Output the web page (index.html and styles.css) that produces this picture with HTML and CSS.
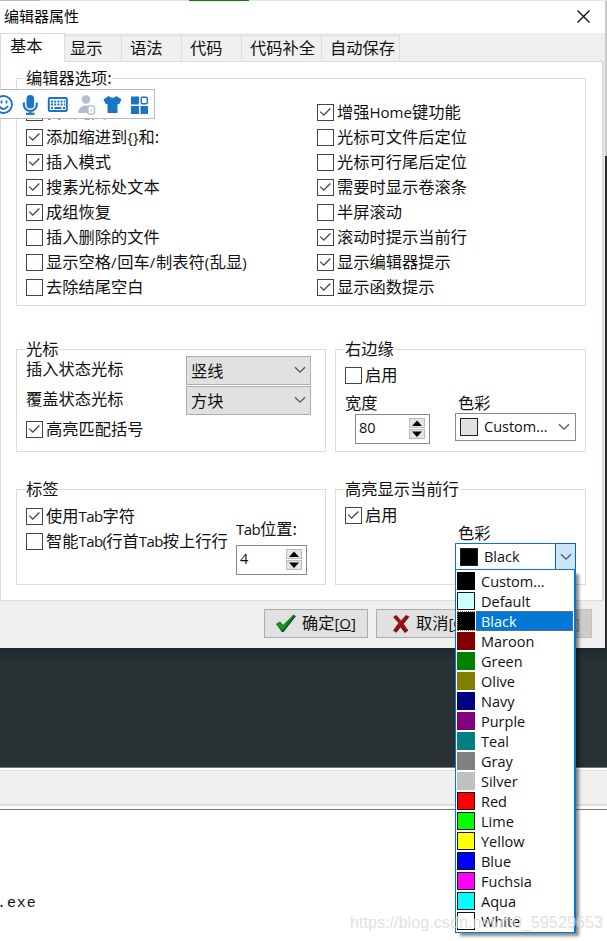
FILE: index.html
```
<!DOCTYPE html>
<html lang="zh-CN">
<head>
<meta charset="utf-8">
<title>编辑器属性</title>
<link rel="stylesheet" href="styles.css">
</head>
<body>
<svg class="defs" width="0" height="0">
  <symbol id="check" viewBox="0 0 17 17"><path d="M2.500 7.500l4 4 7.500-7.500" fill="none" stroke="#444" stroke-width="1.5"/></symbol>
  <symbol id="chev" viewBox="0 0 12 8"><path d="M1 1.2l5 5 5-5" fill="none" stroke="#555" stroke-width="1.3"/></symbol>
  <symbol id="up" viewBox="0 0 14 8"><path d="M2 7l5-5.500L12 7z"/></symbol>
  <symbol id="down" viewBox="0 0 14 8"><path d="M2 1.500l5 5.500 5-5.500z"/></symbol>
</svg>
<div class="strip"><i></i><b></b></div>
<div class="top">
  <main class="dialog">
    <header class="title"><span>编辑器属性</span>
      <svg width="13" height="13" viewBox="0 0 13 13"><path d="M.5.5l12 12M12.5.5l-12 12" stroke="#000" stroke-width="1.2"/></svg>
    </header>
    <nav class="tabs">
      <span class="tab active">基本</span><span class="tab t2">显示</span><span class="tab t3">语法</span><span class="tab t4">代码</span><span class="tab t5">代码补全</span><span class="tab t6">自动保存</span>
    </nav>
    <section class="page">
      <div class="group options">
        <div class="legend">编辑器选项:</div>
        <div class="cols">
          <div class="col">
            <label><svg class="box"><use href="#check"/></svg>自动缩进</label>
            <label><svg class="box"><use href="#check"/></svg><span>添加缩进到<em>{}</em>和:</span></label>
            <label><svg class="box"><use href="#check"/></svg>插入模式</label>
            <label><svg class="box"><use href="#check"/></svg>搜素光标处文本</label>
            <label><svg class="box"><use href="#check"/></svg>成组恢复</label>
            <label><svg class="box"></svg>插入删除的文件</label>
            <label><svg class="box"></svg><span class="marks">显示空格<em>/</em>回车<em>/</em>制表符<em>(</em>乱显<em>)</em></span></label>
            <label><svg class="box"></svg>去除结尾空白</label>
          </div>
          <div class="col">
            <label><svg class="box"><use href="#check"/></svg><span>增强<em>Home</em>键功能</span></label>
            <label><svg class="box"></svg>光标可文件后定位</label>
            <label><svg class="box"></svg>光标可行尾后定位</label>
            <label><svg class="box"><use href="#check"/></svg>需要时显示卷滚条</label>
            <label><svg class="box"></svg>半屏滚动</label>
            <label><svg class="box"><use href="#check"/></svg>滚动时提示当前行</label>
            <label><svg class="box"><use href="#check"/></svg>显示编辑器提示</label>
            <label><svg class="box"><use href="#check"/></svg>显示函数提示</label>
          </div>
        </div>
      </div>
      <div class="pair carets">
        <div class="group">
          <div class="legend">光标</div>
          <div class="line"><span>插入状态光标</span><div class="select">竖线<svg class="chev"><use href="#chev"/></svg></div></div>
          <div class="line"><span>覆盖状态光标</span><div class="select">方块<svg class="chev"><use href="#chev"/></svg></div></div>
          <label class="match"><svg class="box"><use href="#check"/></svg>高亮匹配括号</label>
        </div>
        <div class="group">
          <div class="legend">右边缘</div>
          <label class="enable"><svg class="box"></svg>启用</label>
          <div class="fields">
            <div class="field width"><span>宽度</span><div class="spin"><em>80</em><div class="arrows"><svg><use href="#up"/></svg><svg><use href="#down"/></svg></div></div></div>
            <div class="field"><span>色彩</span><div class="color"><i class="sw"></i><em>Custom...</em><svg class="chev"><use href="#chev"/></svg></div></div>
          </div>
        </div>
      </div>
      <div class="pair lower">
        <div class="group tabopts">
          <div class="legend">标签</div>
          <div class="tabrow">
            <div class="checks">
              <label><svg class="box"><use href="#check"/></svg><span>使用<em>Tab</em>字符</span></label>
              <label><svg class="box"></svg><span>智能<em>Tab(</em>行首<em>Tab</em>按上行行</span></label>
            </div>
            <div class="tabpos"><span><em>Tab</em>位置:</span><div class="spin"><em>4</em><div class="arrows"><svg><use href="#up"/></svg><svg><use href="#down"/></svg></div></div></div>
          </div>
        </div>
        <div class="group">
          <div class="legend">高亮显示当前行</div>
          <label class="enable"><svg class="box"><use href="#check"/></svg>启用</label>
          <div class="field hl"><span>色彩</span>
            <div class="color open"><i class="sw"></i><em>Black</em><div class="drop"><svg class="chev"><use href="#chev"/></svg></div>
              <ul class="list">
                <li><i class="c-black"></i>Custom...</li>
                <li><i class="c-default ol"></i>Default</li>
                <li class="sel"><i class="c-black"></i>Black</li>
                <li><i class="c-maroon"></i>Maroon</li>
                <li><i class="c-green"></i>Green</li>
                <li><i class="c-olive"></i>Olive</li>
                <li><i class="c-navy"></i>Navy</li>
                <li><i class="c-purple"></i>Purple</li>
                <li><i class="c-teal"></i>Teal</li>
                <li><i class="c-gray"></i>Gray</li>
                <li><i class="c-silver"></i>Silver</li>
                <li><i class="c-red ol"></i>Red</li>
                <li><i class="c-lime ol"></i>Lime</li>
                <li><i class="c-yellow ol"></i>Yellow</li>
                <li><i class="c-blue ol"></i>Blue</li>
                <li><i class="c-fuchsia ol"></i>Fuchsia</li>
                <li><i class="c-aqua ol"></i>Aqua</li>
                <li><i class="c-white ol"></i>White</li>
              </ul>
            </div>
          </div>
        </div>
      </div>
    </section>
    <footer class="buttons">
      <button><svg width="22" height="20" viewBox="0 0 22 20"><path d="M1 11l4-2.5 3 3.5L18.5 1.5 20.5 3 8.500 18.500 6.500 18.500z" fill="#087a12"/><path d="M2.500 11.200L5 9.800l2.800 4L18 3 7.400 16.500z" fill="#12a51b"/><path d="M20.500 3L8.500 18.500H6.500" fill="none" stroke="#11305c"/></svg><span>确定<em>[<u>O</u>]</em></span></button>
      <button class="cancel"><svg width="18" height="19" viewBox="0 0 18 19"><path d="M1 3l3.500-2L9 6.500 14 1l3 1.500-5.500 7L16 16l-3 2.500-4.500-6-4.500 6-3-2L6.500 9z" fill="#a00d12"/><path d="M4 18.500l4.500-6 4.500 6 3-2.500M11.500 9.500l5.500-7" fill="none" stroke="#51080c"/></svg><span>取消<em>[<u>C</u>]</em></span></button>
      <button class="help"><em>[<u>H</u>]</em></button>
    </footer>
    <div class="ime">
      <svg width="155" height="29" viewBox="0 0 155 29">
        <g fill="none" stroke="#1b74c5" stroke-width="1.800"><circle cx="3.500" cy="14.500" r="8.500"/><path d="M-1 16q4.500 6 9 0M1.500 10.500v3M6.500 10.500v3"/><path stroke-width="2.200" d="M23.800 12.500v2a6.500 6.500 0 0 0 13 0v-2M30.300 21v3"/><path stroke-width="2.200" d="M26 23.800h8.500"/></g>
        <rect x="26.500" y="5" width="7.600" height="13.500" rx="3.800" fill="#1b74c5"/>
        <rect x="48.800" y="8" width="18" height="13" rx="1" fill="none" stroke="#1b74c5" stroke-width="2"/>
        <path d="M51 11.500h14M51 14.500h14" stroke="#1b74c5" stroke-width="1.800" stroke-dasharray="2 1.200"/><path d="M51 18h2M54.500 18h7M63 18h2" stroke="#1b74c5" stroke-width="1.800"/>
        <g fill="#b4bdcf"><circle cx="86" cy="9.500" r="4.300"/><path d="M78 23c0-10 16-10 16 0z"/></g>
        <rect x="88" y="16" width="6.500" height="8" rx="1" fill="#fff" stroke="#b4bdcf" stroke-width="1.400"/><path d="M91.200 18.500v3" stroke="#b4bdcf"/>
        <path d="M108.500 6q4 3.500 8 0l5 3.500-2.500 5-1.500-.8V23h-10v-9.300l-1.500.8-2.500-5z" fill="#1b74c5"/>
        <path d="M131 6.500h8v8h-8zM131 16h8v8h-8zM140.500 16h7.500v8h-7.500z" fill="#1b74c5"/><rect x="141.200" y="7.200" width="6" height="6.500" rx="1" fill="none" stroke="#1b74c5" stroke-width="1.400"/>
      </svg>
    </div>
  </main>
  <aside class="edge"></aside>
</div>
<div class="editor"></div>
<div class="toolbar"></div>
<div class="console">.exe</div>
<div class="watermark">https://blog.csdn.net/m0_59529653</div>
</body>
</html>
```
FILE: styles.css
```
* { box-sizing: border-box; }
body { margin: 0; width: 607px; height: 941px; overflow: hidden; position: relative; background: #fff; color: #111; font: 16.25px/20px "Noto Sans CJK SC", sans-serif; }
.defs { position: absolute; }
em { font: 15px/20px "Open Sans", sans-serif; }
svg { display: block; flex: none; }
label, .tab, span { white-space: nowrap; }

.strip { height: 1px; display: flex; background: #e4e4e4; }
.strip i { width: 40px; background: #bbb; margin-right: 149px; }
.strip b { width: 60px; background: #107c10; }
.top { display: flex; height: 647px; }
.dialog { position: relative; width: 605px; background: #efefef; display: flex; flex-direction: column; }
.edge { width: 2px; background: linear-gradient(#c9c9c9 155px, #222b30 155px); }
.title { height: 32px; background: #fff; display: flex; justify-content: space-between; align-items: center; padding: 0 15px 1px 4px; color: #000; font-size: 15px; }
.title span { padding-bottom: 2px; }
.tabs { height: 28px; display: flex; align-items: flex-end; position: relative; }
.tab { height: 26px; border: 1px solid #dcdcdc; border-left: 0; border-bottom: 0; background: #f0f0f0; padding: 1px 0 0 5px; width: 58px; }
.tab.active { height: 29px; width: 65px; background: #fff; border-left: 1px solid #dcdcdc; padding: 1px 0 0 9px; margin-bottom: -1px; position: relative; }
.t2 { width: 57px; }
.t3 { width: 60px; padding-left: 8px; }
.t4 { width: 60px; padding-left: 8px; }
.t5 { width: 80px; padding-left: 8px; }
.t6 { width: 78px; padding-left: 8px; }
.page { height: 540px; width: 604px; background: #fff; border: 1px solid #dcdcdc; border-right-width: 2px; padding: 16px 16px 0 15px; }

.group { border: 1px solid #dcdcdc; padding-left: 9px; }
.legend { width: fit-content; height: 20px; margin-top: -12px; margin-bottom: 1px; background: #fff; }
label { display: flex; align-items: flex-start; gap: 3px; height: 25px; line-height: 22px; }
.box { width: 17px; height: 17px; border: 1px solid #444; background: #fff; margin-top: 4px; }
.options { height: 228px; }
.cols { display: grid; grid-template-columns: 291px 1fr; padding-top: 12px; }
.marks em { letter-spacing: .7px; }
.pair { display: grid; grid-template-columns: 310px 251px; gap: 9px; }
.carets { margin-top: 43px; }
.carets .group { height: 103px; }
.line { display: flex; justify-content: space-between; height: 30px; padding-right: 14px; }
.line > span { margin-top: -1px; }
.select { width: 125px; height: 29px; margin-top: -3px; border: 1px solid #adadad; background: #e1e1e1; display: flex; align-items: center; justify-content: space-between; padding: 0 4px 2px; }
.chev { width: 12px; height: 8px; }
.match { margin-top: -2px; }
.enable { margin-top: 5px; }
.fields { display: flex; margin-top: 4px; }
.field { display: flex; flex-direction: column; }
.field.width { width: 113px; }
.spin { width: 75px; height: 30px; border: 1px solid #8a8a8a; background: #fff; display: flex; justify-content: space-between; padding: 3px 4px 0 3px; }
.spin em, .color em { font-size: 14.500px; }
.width .spin { margin: 2px 0 0 10px; }
.arrows { display: flex; flex-direction: column; gap: 1px; }
.arrows svg { width: 16px; height: 10px; border: 1px solid #bbb; background: #e5e5e5; }
.color { width: 121px; height: 28px; border: 1px solid #8a8a8a; display: flex; align-items: center; padding: 0 5px 0 4px; }
.field > .color { margin: 1px 0 0 -3px; }
.sw { width: 18px; height: 18px; border: 1px solid #222; background: #e1e1e1; margin-right: 6px; }
.color em { flex: 1; }
.lower { margin-top: 37px; }
.lower .group { height: 96px; }
.tabrow { display: flex; padding-top: 5px; }
.tabrow label em, .tabpos span em { letter-spacing: -.6px; }
.checks { width: 210px; }
.tabpos { padding-top: 14px; }
.tabpos .spin { width: 71px; margin-top: 6px; }
.field.hl { margin: -6px 0 0 113px; }
.color.open { position: relative; border-color: #0078d7; padding-right: 0; }
.open .sw { background: #000; }
.drop { width: 21px; height: 28px; margin-right: -1px; border: 1px solid #0067b8; background: #cce4f7; display: flex; align-items: center; justify-content: center; }
.list { position: absolute; z-index: 3; left: -1px; top: 25px; width: 121px; height: 364px; margin: 0; padding: 1px; list-style: none; border: 1px solid #0078d7; border-right-width: 2px; background: #fff; box-shadow: 4px 4px 3px -1px #0007; }
.list li { height: 20px; display: flex; align-items: center; gap: 6px; font: 14.500px/19px "Open Sans", sans-serif; }
.list i { width: 18px; height: 18px; }
.list .ol { border: 1px solid #111; }
.list .sel { color: #fff; background: linear-gradient(90deg, #fff 19px, #0078d7 19px); outline: 1px dotted #b96325; outline-offset: -1px; }
.c-black { background: #000; }
.c-default { background: #ccffff; }
.c-maroon { background: #800000; }
.c-green { background: #008000; }
.c-olive { background: #808000; }
.c-navy { background: #000080; }
.c-purple { background: #800080; }
.c-teal { background: #008080; }
.c-gray { background: #808080; }
.c-silver { background: #c0c0c0; }
.c-red { background: #f00; }
.c-lime { background: #0f0; }
.c-yellow { background: #ff0; }
.c-blue { background: #00f; }
.c-fuchsia { background: #f0f; }
.c-aqua { background: #0ff; }
.c-white { background: #fff; }

.buttons { display: flex; gap: 8px; padding: 8px 0 0 264px; }
button { width: 104px; height: 29px; padding: 0 0 1px 10px; border: 1px solid #adadad; background: #e1e1e1; color: #111; display: flex; align-items: center; gap: 5px; font: 16.2px/20px "Noto Sans CJK SC", sans-serif; }
button span { margin-top: -2px; }
.cancel { padding-left: 15px; gap: 6px; }
.help { background: #ccc; border-color: #bfbfbf; color: #999; justify-content: flex-end; padding-right: 11px; }
.ime { position: absolute; z-index: 2; left: 0; top: 88px; width: 155px; height: 30px; background: #fff; border: 1px solid #b9b9c6; border-left: 0; overflow: hidden; }
.editor { height: 120px; background: linear-gradient(#22292c, #293134 14px); border-bottom: 1px solid #777; }
.toolbar { height: 36px; margin-top: 2px; background: #efefef; border-top: 1px solid #ddd; border-bottom: 2px solid #ddd; }
.console { height: 132px; margin-top: 3px; border-top: 1px solid #777; padding-top: 84px; font: 15px/20px "Liberation Mono", monospace; text-indent: -3px; letter-spacing: .9px; }
.watermark { position: absolute; z-index: 5; left: 350px; top: 911px; font: 16.200px/22px "Liberation Sans", sans-serif; color: #d8d8d8cc; white-space: nowrap; }
```
